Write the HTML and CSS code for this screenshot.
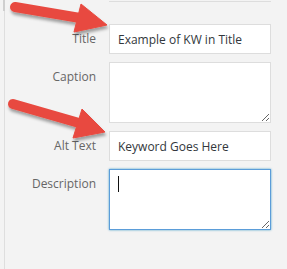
FILE: index.html
```html
<!DOCTYPE html>
<html lang="en">
  <head>
    <meta charset="UTF-8" />
    <meta name="viewport" content="width=device-width, initial-scale=1.0" />
    <title>Attachment Details</title>
    <link rel="stylesheet" href="styles.css">
  </head>
  <body>
    <div class="sidebar">
      <div class="scroll-thumb"></div>
      <div class="prev-field"></div>
      <div class="settings">
        <label class="setting">
          <span class="name">Title</span>
          <input type="text" value="Example of KW in Title" />
        </label>
        <label class="setting">
          <span class="name">Caption</span>
          <textarea></textarea>
        </label>
        <label class="setting">
          <span class="name">Alt Text</span>
          <input type="text" value="Keyword Goes Here" />
        </label>
        <label class="setting">
          <span class="name">Description</span>
          <span class="field">
            <textarea class="focused"></textarea>
            <span class="caret"></span>
          </span>
        </label>
      </div>
    </div>

    <!-- red arrows drawn over the form -->
    <svg class="arrows" width="287" height="269" viewBox="0 0 287 269">
      <defs>
        <filter id="shadow" x="-20%" y="-40%" width="140%" height="180%">
          <feDropShadow dx="1" dy="3" stdDeviation="1.6" flood-color="#000" flood-opacity="0.35" />
        </filter>
      </defs>
      <g filter="url(#shadow)" fill="#e84a3f" stroke="#e84a3f">
        <line x1="15" y1="7" x2="80" y2="18" stroke-width="10" stroke-linecap="round" />
        <polygon points="81,4 107,25 74,32" stroke-width="1" stroke-linejoin="round" />
        <line x1="13" y1="104" x2="79" y2="123" stroke-width="10" stroke-linecap="round" />
        <polygon points="82,109 105,132 73,138" stroke-width="1" stroke-linejoin="round" />
      </g>
    </svg>
  </body>
</html>
```

FILE: styles.css
```css
body {
  margin: 0;
  background: #f3f3f3;
  font-family: "Open Sans", "Liberation Sans", sans-serif;
}
.sidebar {
  position: relative;
  margin-left: 4px;
  border-left: 1px solid #dedede;
  min-height: 269px;
}
.scroll-thumb {
  position: absolute;
  left: -2px;
  top: 0;
  width: 2px;
  height: 11px;
  background: #cfcfcf;
}
.prev-field {
  margin-left: 104px;
  width: 162px;
  height: 1px;
  border-bottom: 1px solid #dddddd;
}
.settings {
  padding-top: 22px;
}
.setting {
  display: flex;
  margin-bottom: 8px;
}
.setting .name {
  width: 91px;
  margin-right: 13px;
  padding-top: 7px;
  line-height: 16px;
  font-size: 12px;
  color: #666;
  text-align: right;
}
.setting input,
.setting textarea {
  box-sizing: border-box;
  width: 162px;
  margin: 0;
  border: 1px solid #dddddd;
  background: #fff;
  font-family: "Open Sans", "Liberation Sans", sans-serif;
  font-size: 12px;
  color: #32373c;
  outline: none;
}
.setting input {
  height: 30px;
  padding: 0 8px;
}
.setting textarea {
  display: block;
  height: 61px;
  padding: 6px 8px;
}
.setting textarea.focused {
  border-color: #5b9dd9;
  box-shadow: 0 0 2px rgba(30, 140, 190, 0.8);
}
.field {
  position: relative;
  display: block;
}
.caret {
  position: absolute;
  left: 9px;
  top: 7px;
  width: 1px;
  height: 16px;
  background: #111;
}
.arrows {
  position: absolute;
  left: 0;
  top: 0;
  pointer-events: none;
}
```
